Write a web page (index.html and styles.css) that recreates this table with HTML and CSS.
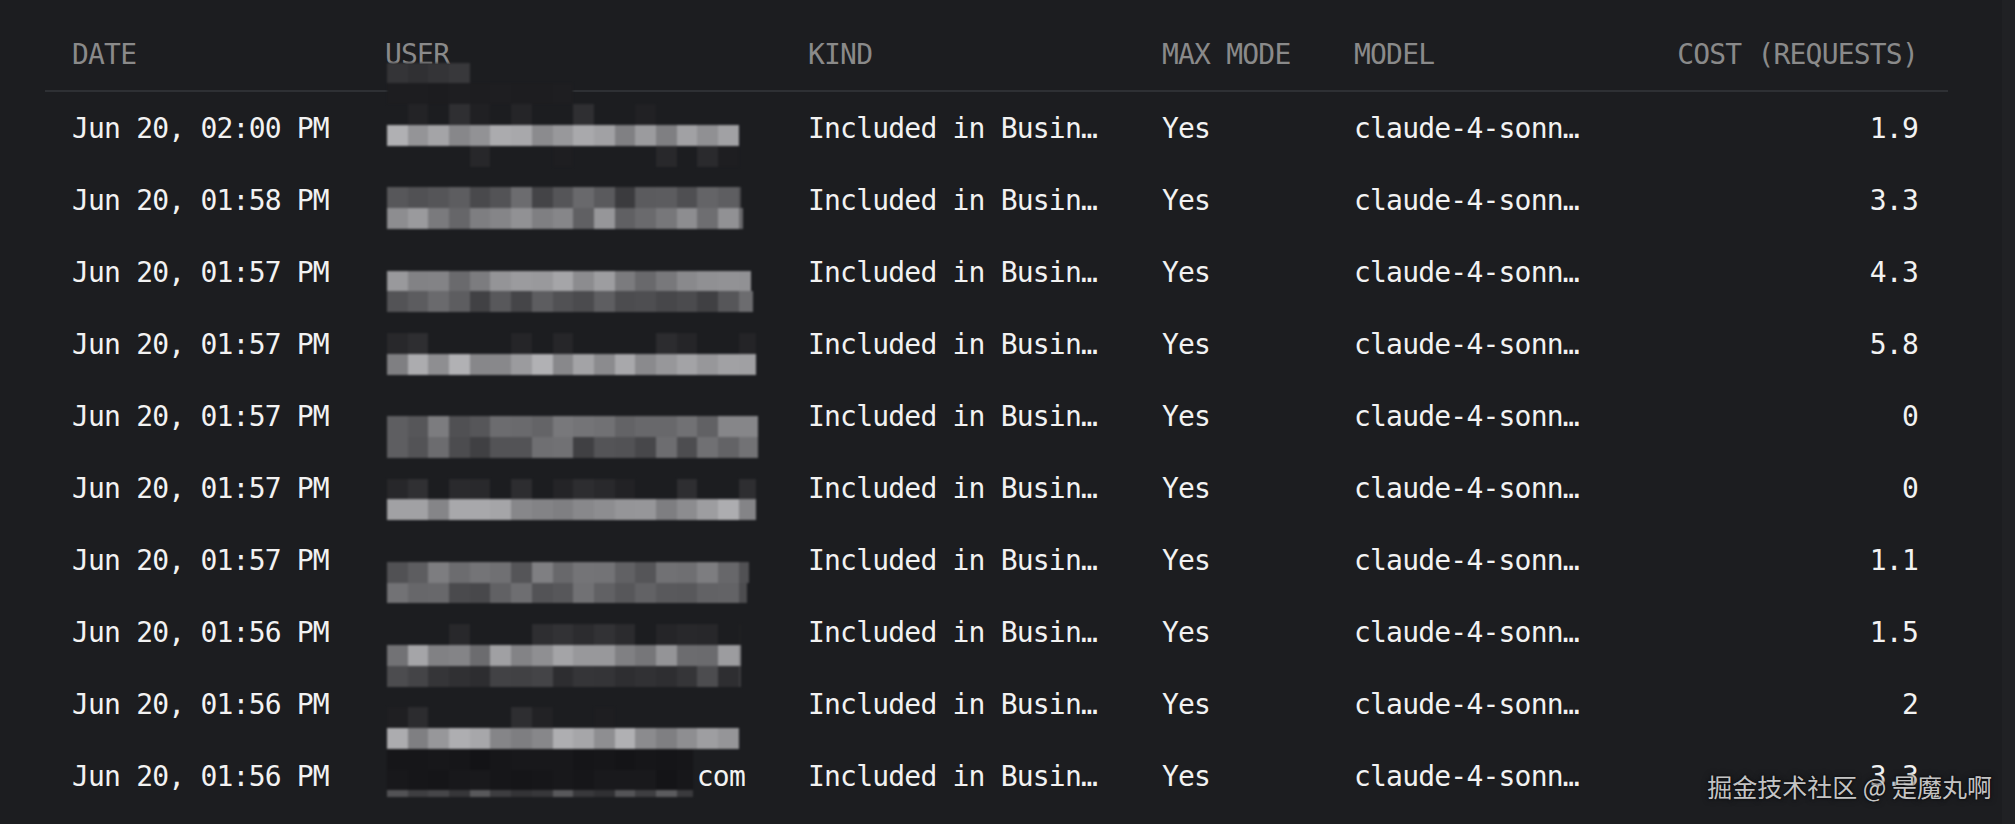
FILE: index.html
```html
<!DOCTYPE html>
<html lang="en">
<head>
<meta charset="utf-8">
<title>Usage</title>
<link rel="stylesheet" href="styles.css">
</head>
<body>
<div class="page">
  <div class="content">
    <div class="table">
      <div class="row head">
        <div class="cell">DATE</div>
        <div class="cell">USER</div>
        <div class="cell">KIND</div>
        <div class="cell">MAX MODE</div>
        <div class="cell">MODEL</div>
        <div class="cell cost">COST (REQUESTS)</div>
      </div>
      <div class="row">
        <div class="cell">Jun 20, 02:00 PM</div><div class="cell"></div>
        <div class="cell">Included in Busin…</div><div class="cell">Yes</div>
        <div class="cell">claude-4-sonn…</div><div class="cell cost">1.9</div>
      </div>
      <div class="row">
        <div class="cell">Jun 20, 01:58 PM</div><div class="cell"></div>
        <div class="cell">Included in Busin…</div><div class="cell">Yes</div>
        <div class="cell">claude-4-sonn…</div><div class="cell cost">3.3</div>
      </div>
      <div class="row">
        <div class="cell">Jun 20, 01:57 PM</div><div class="cell"></div>
        <div class="cell">Included in Busin…</div><div class="cell">Yes</div>
        <div class="cell">claude-4-sonn…</div><div class="cell cost">4.3</div>
      </div>
      <div class="row">
        <div class="cell">Jun 20, 01:57 PM</div><div class="cell"></div>
        <div class="cell">Included in Busin…</div><div class="cell">Yes</div>
        <div class="cell">claude-4-sonn…</div><div class="cell cost">5.8</div>
      </div>
      <div class="row">
        <div class="cell">Jun 20, 01:57 PM</div><div class="cell"></div>
        <div class="cell">Included in Busin…</div><div class="cell">Yes</div>
        <div class="cell">claude-4-sonn…</div><div class="cell cost">0</div>
      </div>
      <div class="row">
        <div class="cell">Jun 20, 01:57 PM</div><div class="cell"></div>
        <div class="cell">Included in Busin…</div><div class="cell">Yes</div>
        <div class="cell">claude-4-sonn…</div><div class="cell cost">0</div>
      </div>
      <div class="row">
        <div class="cell">Jun 20, 01:57 PM</div><div class="cell"></div>
        <div class="cell">Included in Busin…</div><div class="cell">Yes</div>
        <div class="cell">claude-4-sonn…</div><div class="cell cost">1.1</div>
      </div>
      <div class="row">
        <div class="cell">Jun 20, 01:56 PM</div><div class="cell"></div>
        <div class="cell">Included in Busin…</div><div class="cell">Yes</div>
        <div class="cell">claude-4-sonn…</div><div class="cell cost">1.5</div>
      </div>
      <div class="row">
        <div class="cell">Jun 20, 01:56 PM</div><div class="cell"></div>
        <div class="cell">Included in Busin…</div><div class="cell">Yes</div>
        <div class="cell">claude-4-sonn…</div><div class="cell cost">2</div>
      </div>
      <div class="row">
        <div class="cell">Jun 20, 01:56 PM</div><div class="cell"><span class="user-tail">com</span></div>
        <div class="cell">Included in Busin…</div><div class="cell">Yes</div>
        <div class="cell">claude-4-sonn…</div><div class="cell cost">3.3</div>
      </div>
    </div>
  </div>
  <div class="scrollbar"></div>
  <div class="mosaic" id="mosaic"></div>
  <div class="watermark">掘金技术社区 @ 是魔丸啊</div>
</div>
<script src="mosaic.js"></script>
</body>
</html>
```

FILE: styles.css
```css
* { box-sizing: border-box; }
html, body { margin: 0; height: 100%; }
body {
  background: #1c1d20;
  overflow: hidden;
  font-family: "DejaVu Sans Mono", "Liberation Mono", monospace;
}
.page {
  position: relative;
  display: flex;
  height: 824px;
}
.content {
  flex: 1;
  padding-left: 45px;
}
.scrollbar {
  width: 13px;
  background: #202124;
}
.table {
  width: 1903px;
}
.row {
  display: grid;
  grid-template-columns: 313px 423px 354px 192px 300px 1fr;
  height: 72px;
  align-items: center;
  font-size: 28px;
  letter-spacing: -0.8px;
  color: #f2f2f2;
}
.row.head {
  height: 92px;
  align-items: start;
  padding-top: 38px;
  line-height: 34px;
  color: #8a8a8a;
  border-bottom: 2px solid #2e3034;
}
.cell {
  padding-left: 27px;
  white-space: nowrap;
  overflow: hidden;
}
.cell.cost {
  text-align: right;
  padding-right: 30px;
}
.user-tail {
  display: block;
  width: 360px;
  text-align: right;
}
.mosaic {
  position: absolute;
  left: 387px;
  top: 62.6px;
  filter: blur(1.2px);
}
.mrow {
  display: flex;
  height: 20.8px;
  overflow: hidden;
}
.mrow.thin { height: 7px; }
.mblock {
  flex: 0 0 20.7px;
  height: 100%;
}
.watermark {
  position: absolute;
  right: 23px;
  bottom: 22px;
  font-family: "Noto Sans CJK SC", "Noto Sans", sans-serif;
  font-size: 25px;
  line-height: 32px;
  color: rgba(222, 222, 222, 0.9);
  text-shadow: 0 0 3px rgba(0, 0, 0, 0.9), 0 0 6px rgba(20, 21, 24, 0.9);
}
```

FILE: mosaic.js
```js
(function () {
  var types = {
    top:    { b: 50,  r: 6,  s: 0 },
    cover:  { b: 29,  r: 1,  s: 0 },
    faint:  { b: 40,  r: 10, s: 0.55 },
    light:  { b: 150, r: 28, s: 0 },
    lm:     { b: 135, r: 30, s: 0 },
    ml:     { b: 122, r: 32, s: 0 },
    med:    { b: 108, r: 30, s: 0 },
    md:     { b: 88,  r: 26, s: 0 },
    dm:     { b: 84,  r: 26, s: 0 },
    dark:   { b: 62,  r: 20, s: 0 },
    cover2: { b: 22,  r: 3,  s: 0 },
    strip:  { b: 72,  r: 24, s: 0 }
  };
  var rows = [
    ['top', 4], ['cover', 9], ['faint', 17], ['light', 17], ['faint', 17], null,
    ['dm', 17.1], ['ml', 17.2], null, null, ['lm', 17.6], ['dm', 17.7], null,
    ['faint', 17.8], ['light', 17.8], null, null, ['med', 17.9], ['md', 17.9], null,
    ['faint', 17.8], ['light', 17.8], null, null, ['med', 17.5], ['md', 17.4], null,
    ['faint', 17.1], ['lm', 17.1], ['dark', 17.1], null,
    ['faint', 17.1], ['light', 17], ['cover2', 14.8], ['cover2', 14.8], ['strip', 14.8]
  ];
  var seed = 12345;
  function rnd() {
    seed = (seed * 1103515245 + 12345) & 0x7fffffff;
    return seed / 0x7fffffff;
  }
  var root = document.getElementById('mosaic');
  rows.forEach(function (row) {
    var el = document.createElement('div');
    el.className = 'mrow';
    if (!row) { root.appendChild(el); return; }
    var t = types[row[0]];
    if (row[0] === 'strip') el.className += ' thin';
    el.style.width = (row[1] * 20.7).toFixed(1) + 'px';
    var n = Math.ceil(row[1]);
    for (var i = 0; i < n; i++) {
      var b = document.createElement('div');
      b.className = 'mblock';
      if (t.s && rnd() < t.s) {
        b.style.background = 'transparent';
      } else {
        var v = Math.round(t.b + (rnd() - 0.5) * 2 * t.r);
        b.style.background = 'rgb(' + v + ',' + v + ',' + (v + 3) + ')';
      }
      el.appendChild(b);
    }
    root.appendChild(el);
  });
})();
```
